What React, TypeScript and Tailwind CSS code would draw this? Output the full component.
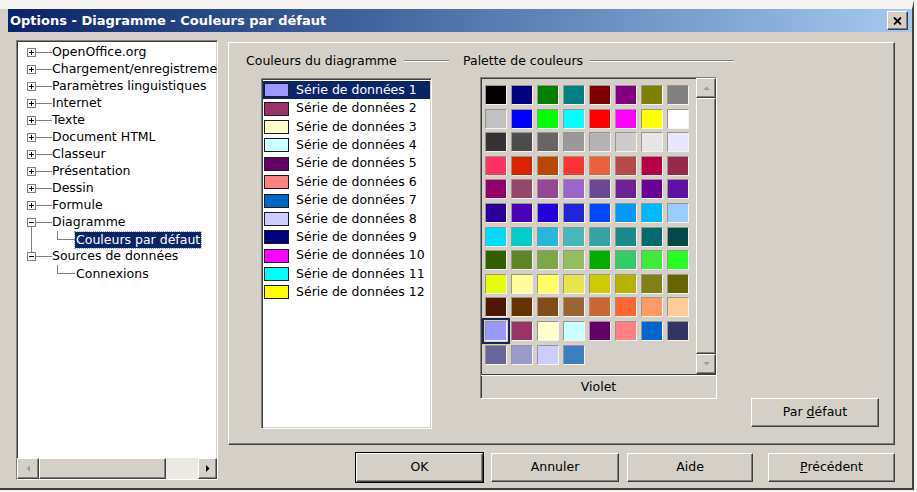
import React from "react";

// Win2000-style bevels used by the dialog widgets
const raised =
  "border border-t-white border-l-white border-b-[#404040] border-r-[#404040] shadow-[inset_-1px_-1px_0_#808080,inset_1px_1px_0_#d4d0c8]";
const sunken =
  "border border-t-[#808080] border-l-[#808080] border-b-white border-r-white shadow-[inset_1px_1px_0_#404040,inset_-1px_-1px_0_#d4d0c8]";

type TreeRow = {
  label: string;
  child?: boolean;
  open?: boolean;
  lineAbove?: boolean;
  lineBelow?: boolean;
  trunk?: boolean;
  selected?: boolean;
};

const treeRows: TreeRow[] = [
  { label: "OpenOffice.org" },
  { label: "Chargement/enregistrement" },
  { label: "Paramètres linguistiques" },
  { label: "Internet" },
  { label: "Texte" },
  { label: "Document HTML" },
  { label: "Classeur" },
  { label: "Présentation" },
  { label: "Dessin" },
  { label: "Formule" },
  { label: "Diagramme", open: true, lineBelow: true },
  { label: "Couleurs par défaut", child: true, trunk: true, selected: true },
  { label: "Sources de données", open: true, lineAbove: true },
  { label: "Connexions", child: true },
];

const series = [
  "#9999ff",
  "#993366",
  "#ffffcc",
  "#ccffff",
  "#660066",
  "#ff8080",
  "#0066cc",
  "#ccccff",
  "#000080",
  "#ff00ff",
  "#00ffff",
  "#ffff00",
];

const palette = [
  "#000000", "#000080", "#008000", "#008080", "#800000", "#800080", "#808000", "#808080",
  "#c0c0c0", "#0000ff", "#00ff00", "#00ffff", "#ff0000", "#ff00ff", "#ffff00", "#ffffff",
  "#333333", "#4c4c4c", "#666666", "#999999", "#b3b3b3", "#cccccc", "#e6e6e6", "#e6e6ff",
  "#ff3366", "#dc2300", "#b84700", "#ff3333", "#eb613d", "#b84747", "#b80047", "#99284c",
  "#94006b", "#94476b", "#944794", "#9966cc", "#6b4794", "#6b2394", "#6b0094", "#5e11a6",
  "#280099", "#4700b8", "#2300dc", "#2323dc", "#0047ff", "#0099ff", "#00b8ff", "#99ccff",
  "#00dcff", "#00cccc", "#23b8dc", "#47b8b8", "#33a3a3", "#198a8a", "#006b6b", "#004a4a",
  "#355e00", "#5c8526", "#7da647", "#94bd5e", "#00ae00", "#33cc66", "#3deb3d", "#23ff23",
  "#e6ff00", "#ffff99", "#ffff66", "#e6e64c", "#cccc00", "#b3b300", "#808019", "#666600",
  "#4c1900", "#663300", "#804c19", "#996633", "#cc6633", "#ff6633", "#ff9966", "#ffcc99",
  "#9999ff", "#993366", "#ffffcc", "#ccffff", "#660066", "#ff8080", "#0066cc", "#333366",
  "#666699", "#9999cc", "#ccccff", "#3a80c0",
];

function Expander({ open, lineAbove, lineBelow }: { open?: boolean; lineAbove?: boolean; lineBelow?: boolean }) {
  return (
    <div className="flex h-full w-[9px] shrink-0 flex-col items-center">
      <div className={`h-[4px] w-px ${lineAbove ? "bg-[#808080]" : ""}`} />
      <svg width="9" height="9" viewBox="0 0 9 9" shapeRendering="crispEdges">
        <rect x="0.5" y="0.5" width="8" height="8" fill="#fff" stroke="#808080" />
        <path d="M2 4.5h5" stroke="#000" />
        {!open && <path d="M4.5 2v5" stroke="#000" />}
      </svg>
      <div className={`h-[4px] w-px ${lineBelow ? "bg-[#808080]" : ""}`} />
    </div>
  );
}

function Tree() {
  return (
    <div className={`flex h-[440px] w-[202px] flex-col bg-white ${sunken}`}>
      <div className="flex-1 overflow-hidden pt-[3px]">
        {treeRows.map((row) =>
          row.child ? (
            <div key={row.label} className="flex h-[17px] whitespace-nowrap">
              <div className="w-[10px] shrink-0" />
              <div className="flex w-[9px] shrink-0 justify-center">
                {row.trunk && <div className="h-full w-px bg-[#808080]" />}
              </div>
              <div className="w-[21px] shrink-0" />
              <div className="h-[9px] w-[18px] shrink-0 border-b border-l border-[#808080]" />
              <div className="flex items-center">
                <span
                  className={
                    row.selected
                      ? "bg-[#0a246a] px-px leading-[16px] text-white outline-1 outline-dotted outline-[#a0a0c0]"
                      : "px-px leading-[16px]"
                  }
                >
                  {row.label}
                </span>
              </div>
            </div>
          ) : (
            <div key={row.label} className="flex h-[17px] items-center whitespace-nowrap">
              <div className="w-[10px] shrink-0" />
              <Expander open={row.open} lineAbove={row.lineAbove} lineBelow={row.lineBelow} />
              <div className="h-px w-[16px] shrink-0 bg-[#808080]" />
              <span>{row.label}</span>
            </div>
          ),
        )}
      </div>
      <div className="flex h-[21px] bg-[#d4d0c8]">
        <div className={`flex w-[22px] items-center justify-center ${raised}`}>
          <svg width="4" height="7" viewBox="0 0 4 7">
            <path d="M4 0v7L0.5 3.5z" fill="#a0a0a0" />
          </svg>
        </div>
        <div className={`w-[127px] ${raised}`} />
        <div className="flex-1 bg-[#ebe9e4]" />
        <div className={`flex w-[19px] items-center justify-center ${raised}`}>
          <svg width="4" height="7" viewBox="0 0 4 7">
            <path d="M0 0v7l3.5-3.5z" fill="#000" />
          </svg>
        </div>
      </div>
    </div>
  );
}

function GroupLabel({ text }: { text: string }) {
  return (
    <div className="flex h-[16px] items-center">
      <span className="whitespace-nowrap">{text}</span>
      <div className="ml-[7px] h-[2px] flex-1 border-t border-b border-t-[#808080] border-b-white" />
    </div>
  );
}

function SeriesList() {
  return (
    <div className={`ml-[15px] mt-[9px] h-[351px] w-[171px] bg-white px-px pt-[2px] ${sunken}`}>
      {series.map((c, i) => (
        <div
          key={i}
          className={`flex h-[18.4px] items-center ${i === 0 ? "bg-[#0a246a] text-white" : "text-black"}`}
        >
          <div className="ml-px h-[14px] w-[25px] border border-[#1c1c1c]" style={{ backgroundColor: c }} />
          <span className="ml-[7px] whitespace-nowrap">Série de données {i + 1}</span>
        </div>
      ))}
    </div>
  );
}

function Palette() {
  return (
    <div className={`ml-[17px] mt-[8px] flex h-[322px] w-[237px] flex-col bg-[#d4d0c8] ${sunken}`}>
      <div className="flex h-[296px]">
        <div className="flex-1 pl-[4px] pt-[7px]">
          <div className="grid grid-cols-[repeat(8,22px)] gap-x-[4px] gap-y-[3.6px]">
            {palette.map((c, i) => (
              <div
                key={i}
                className={`h-[20px] w-[22px] border border-t-[#9a968e] border-l-[#9a968e] border-b-[#f4f3f0] border-r-[#f4f3f0] ${
                  i === 80 ? "outline-2 outline-offset-1 outline-[#1c2450]" : ""
                }`}
                style={{ backgroundColor: c }}
              />
            ))}
          </div>
        </div>
        <div className="flex w-[20px] flex-col">
          <div className={`flex h-[20px] items-center justify-center ${raised}`}>
            <svg width="7" height="4" viewBox="0 0 7 4">
              <path d="M0 4h7L3.5 0.5z" fill="#a0a0a0" />
            </svg>
          </div>
          <div className={`flex-1 ${raised}`} />
          <div className={`flex h-[20px] items-center justify-center ${raised}`}>
            <svg width="7" height="4" viewBox="0 0 7 4">
              <path d="M0 0h7L3.5 3.5z" fill="#a0a0a0" />
            </svg>
          </div>
        </div>
      </div>
      <div className="h-[2px] border-t border-b border-t-[#404040] border-b-white" />
      <div className="flex flex-1 items-center justify-center">Violet</div>
    </div>
  );
}

function Button({ children, width, isDefault }: { children: React.ReactNode; width: string; isDefault?: boolean }) {
  return (
    <div
      className={`flex h-[29px] items-center justify-center ${width} ${
        isDefault ? "outline outline-1 outline-black" : ""
      } ${raised}`}
    >
      {children}
    </div>
  );
}

export default function App() {
  return (
    <div className="flex h-[492px] w-[917px] flex-col bg-[#f2f1ed] pb-[2px] pr-[3px] font-['DejaVu_Sans',sans-serif] text-[12.5px] text-black">
      <div className="flex flex-1 flex-col border-t-[9px] border-r-2 border-b-2 border-t-[#f4f3f0] border-r-[#404040] border-b-[#404040] bg-[#d4d0c8]">
        <div className="ml-[8px] flex h-[23px] items-center bg-gradient-to-r from-[#0a246a] to-[#a6caf0] pl-[2px] pr-[4px]">
          <span className="flex-1 font-bold text-[13px] text-white">Options - Diagramme - Couleurs par défaut</span>
          <div className={`flex h-[19px] w-[21px] items-center justify-center bg-[#d4d0c8] ${raised}`}>
            <svg width="9" height="8" viewBox="0 0 9 8">
              <path d="M1 0.5l7 7M8 0.5l-7 7" stroke="#000" strokeWidth="1.8" />
            </svg>
          </div>
        </div>

        <div className="flex pl-[16px] pt-[8px]">
          <Tree />

          <div className="ml-[10px] flex w-[667px] flex-col">
            <div className={`mt-[2px] flex h-[403px] items-start pl-[17px] pt-[10px] ${raised}`}>
              <div className="flex w-[203px] flex-col">
                <GroupLabel text="Couleurs du diagramme" />
                <SeriesList />
              </div>
              <div className="ml-[14px] flex w-[271px] flex-col">
                <GroupLabel text="Palette de couleurs" />
                <Palette />
              </div>
              <div className="flex flex-1 flex-col items-end self-stretch justify-end pb-[17px] pr-[15px]">
                <Button width="w-[128px]">
                  <span>
                    Par <span className="underline">d</span>éfaut
                  </span>
                </Button>
              </div>
            </div>

            <div className="mt-[8px] flex justify-end">
              <Button width="w-[127px]" isDefault>
                OK
              </Button>
              <div className="w-[8px]" />
              <Button width="w-[128px]">Annuler</Button>
              <div className="w-[8px]" />
              <Button width="w-[126px]">Aide</Button>
              <div className="w-[15px]" />
              <Button width="w-[127px]">
                <span>
                  <span className="underline">P</span>récédent
                </span>
              </Button>
            </div>
          </div>
        </div>
      </div>
    </div>
  );
}
